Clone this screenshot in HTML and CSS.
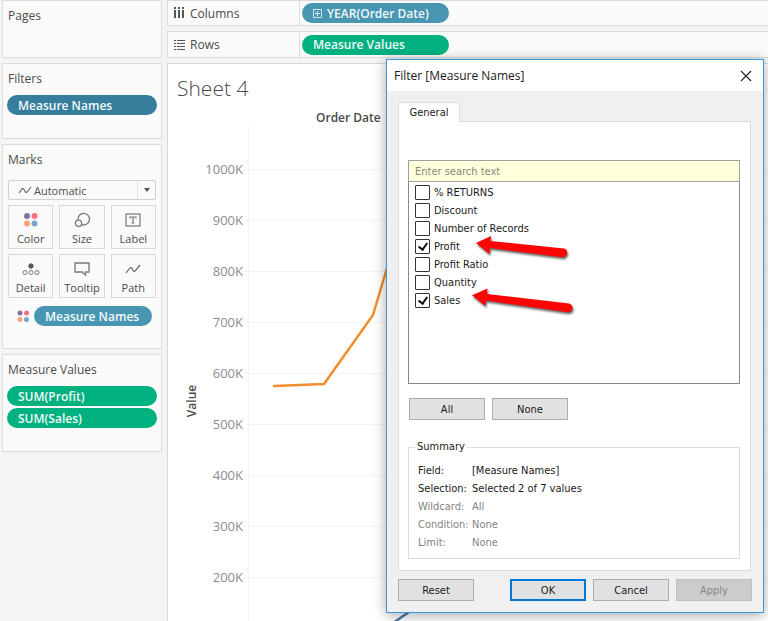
FILE: index.html
```html
<!DOCTYPE html>
<html lang="en">
<head>
  <meta charset="UTF-8" />
  <meta name="viewport" content="width=device-width, initial-scale=1.0"/>
  <title>Sheet 4</title>
  <link rel="stylesheet" href="styles.css">
</head>
<body>

<div class="workspace">

  <aside class="sidebar">
    <section class="card pages">
      <h2>Pages</h2>
    </section>

    <section class="card filters">
      <h2>Filters</h2>
      <button class="pill selected">Measure Names</button>
    </section>

    <section class="card marks">
      <h2>Marks</h2>
      <div class="mark-type">
        <svg width="14" height="10" viewBox="0 0 14 10"><path d="M1 8 L4 4 Q5 3 6 4.500 L7.500 7 Q8.500 8 9.500 6.500 L13 2" fill="none" stroke="#666" stroke-width="1.2"/></svg>
        <select aria-label="Mark type">
          <option>Automatic</option>
        </select>
        <span class="caret"></span>
      </div>
      <div class="mark-grid">
        <button>
          <svg width="18" height="18" viewBox="0 0 18 18"><circle cx="5" cy="5" r="3" fill="#86719c"/><circle cx="12.500" cy="5" r="3" fill="#f96f80"/><circle cx="5" cy="12.500" r="3" fill="#f3a672"/><circle cx="12.500" cy="12.500" r="3" fill="#7ba3cc"/></svg>
          Color
        </button>
        <button>
          <svg width="18" height="18" viewBox="0 0 18 18" fill="none" stroke="#777" stroke-width="1.3"><path d="M5 9 A5.800 5.800 0 1 1 8.500 13.500"/><circle cx="5.500" cy="12.300" r="3.200"/></svg>
          Size
        </button>
        <button>
          <svg width="18" height="18" viewBox="0 0 18 18" fill="none" stroke="#777" stroke-width="1.2"><rect x="2" y="3" width="14" height="12"/><path d="M6 7.500 V6 H12 V7.500 M9 6 V12 M7.500 12 H10.500"/></svg>
          Label
        </button>
        <button>
          <svg width="18" height="18" viewBox="0 0 18 18" fill="none" stroke="#777"><circle cx="9" cy="6" r="2.200" fill="#555" stroke="#555"/><circle cx="3" cy="12.500" r="2"/><circle cx="9" cy="12.500" r="2"/><circle cx="15" cy="12.500" r="2"/></svg>
          Detail
        </button>
        <button>
          <svg width="18" height="18" viewBox="0 0 18 18" fill="none" stroke="#777" stroke-width="1.300"><path d="M2 3 H16 V12 H12.500 V15 L9 12 H2 Z"/></svg>
          Tooltip
        </button>
        <button>
          <svg width="18" height="18" viewBox="0 0 18 18" fill="none" stroke="#666" stroke-width="1.200"><path d="M2 13 L6 8 Q7 7 8 8.500 L9.500 11 Q10.500 12 11.500 10.500 L16 5"/></svg>
          Path
        </button>
      </div>
      <div class="encoding">
        <svg width="14" height="14" viewBox="0 0 14 14"><circle cx="4" cy="4" r="2.500" fill="#86719c"/><circle cx="10.500" cy="4" r="2.500" fill="#f96f80"/><circle cx="4" cy="10.500" r="2.500" fill="#f3a672"/><circle cx="10.500" cy="10.500" r="2.500" fill="#7ba3cc"/></svg>
        <button class="pill dimension">Measure Names</button>
      </div>
    </section>

    <section class="card measures">
      <h2>Measure Values</h2>
      <button class="pill measure">SUM(Profit)</button>
      <button class="pill measure">SUM(Sales)</button>
    </section>
  </aside>

  <main class="main">
    <div class="shelf">
      <div class="shelf-name">
        <svg width="12" height="12" viewBox="0 0 12 12" fill="#555"><path d="M1 0h2v2h-2z M5 0h2v2h-2z M9 0h2v2h-2z M1 3h2v8h-2z M5 3h2v8h-2z M9 3h2v8h-2z"/></svg>
        Columns
      </div>
      <button class="pill dimension">
        <svg width="9" height="9" viewBox="0 0 9 9" fill="none" stroke="#d5e8ef"><path d="M.5 .5h8v8h-8z M2 4.500h5 M4.500 2v5"/></svg>
        YEAR(Order Date)
      </button>
    </div>
    <div class="shelf">
      <div class="shelf-name">
        <svg width="12" height="12" viewBox="0 0 12 12" fill="#555"><path d="M1 1h2v1h-2z M1 4h2v1h-2z M1 7h2v1h-2z M1 10h2v1h-2z M4 1h8v1h-8z M4 4h8v1h-8z M4 7h8v1h-8z M4 10h8v1h-8z"/></svg>
        Rows
      </div>
      <button class="pill measure">Measure Values</button>
    </div>

    <section class="sheet">
      <h1>Sheet 4</h1>
      <h3>Order Date</h3>
      <svg class="chart" width="100%">
        <g class="grid">
          <line x1="77" x2="100%" y1="43.5" y2="43.5"/>
          <line x1="77" x2="100%" y1="94.5" y2="94.5"/>
          <line x1="77" x2="100%" y1="145.5" y2="145.5"/>
          <line x1="77" x2="100%" y1="196.5" y2="196.5"/>
          <line x1="77" x2="100%" y1="247.5" y2="247.5"/>
          <line x1="77" x2="100%" y1="298.5" y2="298.5"/>
          <line x1="77" x2="100%" y1="349.5" y2="349.5"/>
          <line x1="77" x2="100%" y1="400.5" y2="400.5"/>
          <line x1="77" x2="100%" y1="451.5" y2="451.5"/>
          <line x1="80.5" x2="80.5" y1="0" y2="100%"/>
        </g>
        <g class="ticks">
          <text x="75" y="48">1000K</text>
          <text x="75" y="99">900K</text>
          <text x="75" y="150">800K</text>
          <text x="75" y="201">700K</text>
          <text x="75" y="252">600K</text>
          <text x="75" y="303">500K</text>
          <text x="75" y="354">400K</text>
          <text x="75" y="405">300K</text>
          <text x="75" y="456">200K</text>
        </g>
        <text class="axis-title" transform="translate(28 275) rotate(-90)">Value</text>
        <polyline class="sales" points="106,260 156,258 205,189 219,142 255,20"/>
        <polyline class="profit" points="225,497 241,486 255,478"/>
      </svg>
    </section>
  </main>
</div>

<div class="dialog" role="dialog" aria-labelledby="dialogTitle">
  <div class="titlebar">
    <span id="dialogTitle">Filter [Measure Names]</span>
    <button class="close" aria-label="Close">
      <svg width="12" height="12" viewBox="0 0 12 12"><path d="M1 1 L11 11 M11 1 L1 11" stroke="#222" stroke-width="1.100"/></svg>
    </button>
  </div>

  <div class="dialog-body">
    <button class="tab">General</button>
    <div class="tab-panel">
      <div class="picker">
        <input class="search" type="text" placeholder="Enter search text" aria-label="Search fields">
        <div class="options">
          <label><input type="checkbox"> % RETURNS</label>
          <label><input type="checkbox"> Discount</label>
          <label><input type="checkbox"> Number of Records</label>
          <label><input type="checkbox" checked> Profit</label>
          <label><input type="checkbox"> Profit Ratio</label>
          <label><input type="checkbox"> Quantity</label>
          <label><input type="checkbox" checked> Sales</label>
        </div>
        <svg class="arrows" width="108" height="84" viewBox="472 236 108 84">
          <path d="M476 243 L491 236 L490.500 241 L564 248.500 Q568 250 567 253.500 Q566 257.500 562 257.300 L490 248 L489.500 254 Z"/>
          <path d="M472 295.300 L487.500 288.500 L487 294 L569 303.500 Q573 305 572.500 308.500 Q571.500 312.500 567.500 312.300 L486 300.500 L485.300 306 Z"/>
        </svg>
      </div>

      <div class="pick-buttons">
        <button class="btn">All</button>
        <button class="btn">None</button>
      </div>

      <fieldset>
        <legend>Summary</legend>
        <dl>
          <dt>Field:</dt><dd>[Measure Names]</dd>
          <dt>Selection:</dt><dd>Selected 2 of 7 values</dd>
          <dt class="off">Wildcard:</dt><dd class="off">All</dd>
          <dt class="off">Condition:</dt><dd class="off">None</dd>
          <dt class="off">Limit:</dt><dd class="off">None</dd>
        </dl>
      </fieldset>
    </div>

    <div class="dialog-buttons">
      <button class="btn reset">Reset</button>
      <button class="btn primary">OK</button>
      <button class="btn">Cancel</button>
      <button class="btn" disabled>Apply</button>
    </div>
  </div>
</div>

</body>
</html>
```
FILE: styles.css
```css
* {
  box-sizing: border-box;
  margin: 0;
  padding: 0;
}

body {
  background-color: #f4f4f4;
  color: #4a4a4a;
  font-family: "Open Sans", "Noto Sans", sans-serif;
  font-size: 12px;
  overflow: hidden;
}

button,
input,
select {
  font: inherit;
  color: inherit;
}

svg {
  flex-shrink: 0;
}

.workspace {
  display: flex;
  gap: 5px;
  height: 100vh;
  padding-left: 2px;
}

/* left column */
.sidebar {
  width: 160px;
  flex-shrink: 0;
  display: flex;
  flex-direction: column;
  gap: 5px;
}

.card {
  background-color: #fafafa;
  border: 1px solid #dcdcdc;
  padding: 6px 4px;
}

.card h2 {
  font-size: 12px;
  font-weight: normal;
  line-height: 18px;
  padding-left: 1px;
}

.pages {
  min-height: 58px;
}

.filters {
  min-height: 76px;
}

.marks {
  min-height: 205px;
}

.measures {
  min-height: 98px;
}

.pill {
  display: flex;
  align-items: center;
  gap: 5px;
  width: 150px;
  height: 20px;
  padding: 0 11px;
  border: none;
  border-radius: 10px;
  color: #f4fafa;
  font-size: 12px;
  font-weight: 600;
  white-space: nowrap;
}

.card h2 + .pill {
  margin-top: 7px;
}

.pill + .pill {
  margin-top: 2px;
}

.selected {
  background-color: #367e9c;
}

.dimension {
  background-color: #4996b2;
}

.measure {
  background-color: #00b180;
}

.mark-type {
  display: flex;
  align-items: center;
  height: 20px;
  margin: 11px 1px 5px;
  padding-left: 9px;
  border: 1px solid #d0d0d0;
  border-radius: 2px;
}

.mark-type select {
  flex: 1;
  min-width: 0;
  height: 18px;
  padding-left: 2px;
  appearance: none;
  border: none;
  background: none;
  font-size: 11px;
}

.caret {
  width: 18px;
  height: 18px;
  border-left: 1px solid #e0e0e0;
  display: flex;
  align-items: center;
  justify-content: center;
}

.caret::after {
  content: "";
  border: 3px solid transparent;
  border-top: 4px solid #555;
  border-bottom: none;
}

.mark-grid {
  display: grid;
  grid-template-columns: repeat(3, 1fr);
  gap: 5px 6px;
  margin: 0 1px;
}

.mark-grid button {
  display: flex;
  flex-direction: column;
  align-items: center;
  height: 44px;
  padding-top: 5px;
  border: 1px solid #d8d8d8;
  background-color: #fafafa;
  font-size: 11px;
  line-height: 20px;
}

.encoding {
  display: flex;
  align-items: center;
  gap: 4px;
  margin: 8px 0 0 9px;
}

.encoding .pill {
  width: 118px;
}

/* shelves and sheet */
.main {
  flex: 1;
  min-width: 0;
  display: flex;
  flex-direction: column;
  gap: 5px;
}

.shelf {
  display: flex;
  align-items: center;
  gap: 2px;
  height: 27px;
  flex-shrink: 0;
  background-color: #fafafa;
  border: 1px solid #dcdcdc;
  border-right: none;
}

.shelf:first-child {
  height: 26px;
}

.shelf-name {
  display: flex;
  align-items: center;
  gap: 5px;
  width: 132px;
  height: 100%;
  padding-left: 5px;
  border-right: 1px solid #dcdcdc;
}

.shelf .pill {
  width: 147px;
}

.sheet {
  flex: 1;
  min-height: 0;
  display: flex;
  flex-direction: column;
  background-color: #fff;
  border: 1px solid #d8d8d8;
  border-right: none;
  border-bottom: none;
}

.sheet h1 {
  padding: 10px 9px 0;
  font-size: 21px;
  font-weight: 300;
  line-height: 28px;
}

.sheet h3 {
  padding: 7px 0 0 148px;
  font-size: 12px;
  font-weight: 600;
  line-height: 17px;
}

.chart {
  flex: 1;
  min-height: 0;
}

.grid line {
  stroke: #f3f3f3;
}

.ticks text {
  fill: #8c8c8c;
  font-size: 13px;
  text-anchor: end;
}

.axis-title {
  fill: #4a4a4a;
  font-size: 12px;
  font-weight: 600;
  text-anchor: middle;
}

.sales,
.profit {
  fill: none;
  stroke: #f28e2b;
  stroke-width: 2.5px;
  stroke-linejoin: round;
  stroke-linecap: round;
}

.profit {
  stroke: #4e79a7;
}

/* filter dialog */
.dialog {
  position: absolute;
  top: 59px;
  right: 4px;
  width: 378px;
  background-color: #f0f0f0;
  border: 1px solid #3c97dc;
  box-shadow: 0 2px 12px rgba(0, 0, 0, 0.35);
  color: #1a1a1a;
  font-family: "DejaVu Sans Condensed", "Noto Sans", sans-serif;
  font-size: 11px;
}

.titlebar {
  display: flex;
  align-items: center;
  justify-content: space-between;
  height: 31px;
  padding: 0 11px 0 7px;
  background-color: #fff;
  font-family: "Open Sans", "Noto Sans", sans-serif;
  font-size: 12px;
}

.close {
  display: flex;
  border: none;
  background: none;
}

.dialog-body {
  padding: 11px;
}

.tab {
  display: block;
  position: relative;
  width: 62px;
  height: 20px;
  margin-bottom: -1px;
  border: 1px solid #dcdcdc;
  border-bottom: none;
  background-color: #fff;
}

.tab-panel {
  margin-right: 1px;
  padding: 38px 10px 11px 9px;
  background-color: #fff;
  border: 1px solid #dcdcdc;
}

.picker {
  position: relative;
}

.search {
  display: block;
  width: 100%;
  height: 22px;
  padding: 0 6px;
  border: 1px solid #a0a0a0;
  background-color: #ffffdc;
}

.search::placeholder {
  color: #8a8a78;
}

.options {
  height: 202px;
  padding: 1px 6px;
  border: 1px solid #888;
  border-top: none;
}

.options label {
  display: flex;
  align-items: center;
  gap: 4px;
  height: 18px;
}

.options input {
  appearance: none;
  width: 15px;
  height: 15px;
  border: 1px solid #333;
  border-radius: 1px;
  background-color: #fff;
  display: flex;
  align-items: center;
  justify-content: center;
}

.options input:checked::after {
  content: "";
  width: 4px;
  height: 7px;
  margin-bottom: 2px;
  border: solid #111;
  border-width: 0 2px 2px 0;
  transform: rotate(35deg);
}

.arrows {
  position: absolute;
  left: 64px;
  top: 76px;
  fill: #fb0505;
  filter: drop-shadow(1px 2px 1px rgba(0, 0, 0, 0.6));
}

.btn {
  width: 76px;
  height: 22px;
  border: 1px solid #adadad;
  background-color: #e1e1e1;
}

.btn:disabled {
  background-color: #cccccc;
  border-color: #bfbfbf;
  color: #838383;
}

.primary {
  border: 2px solid #0078d7;
}

.pick-buttons {
  display: flex;
  gap: 7px;
  padding: 14px 0 0 1px;
}

fieldset {
  margin-top: 20px;
  padding: 8px 9px 6px;
  border: 1px solid #dcdcdc;
}

legend {
  padding: 0 2px;
  margin-left: -3px;
  line-height: 14px;
}

dl {
  display: grid;
  grid-template-columns: 54px 1fr;
  line-height: 18px;
}

.off {
  color: #838383;
}

.dialog-buttons {
  display: flex;
  gap: 7px;
  margin-top: 8px;
}

.reset {
  margin-right: auto;
}
```
